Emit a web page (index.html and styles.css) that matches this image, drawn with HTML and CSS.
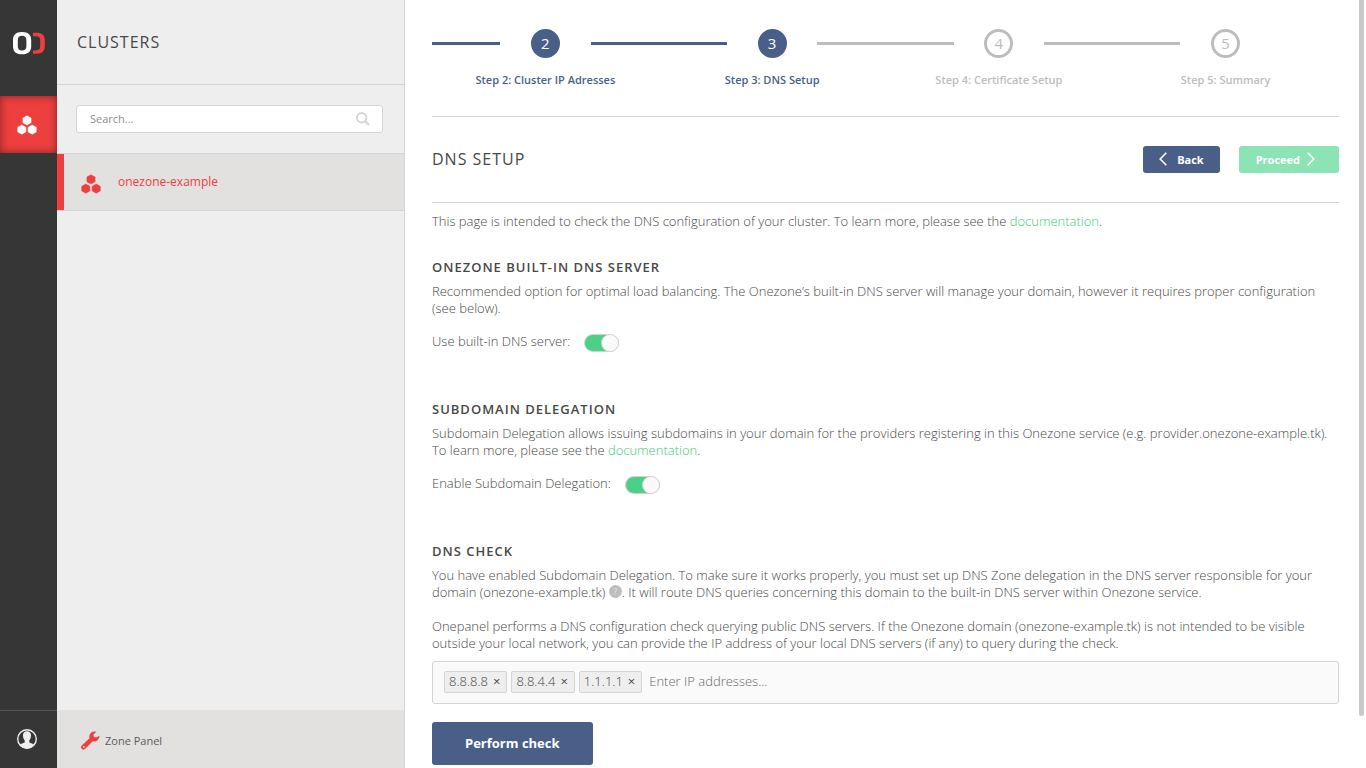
FILE: index.html
```html
<!DOCTYPE html>
<html lang="en">
<head>
<meta charset="utf-8">
<meta name="viewport" content="width=device-width, initial-scale=1">
<title>DNS Setup</title>
<link rel="stylesheet" href="styles.css">
</head>
<body>
<svg class="defs" aria-hidden="true">
  <symbol id="cluster" viewBox="0 0 20 20">
    <path d="M10 .8l4.100 2.300v4.600L10 10 5.900 7.700V3.100zM4.800 10l4.100 2.300v4.600l-4.100 2.300-4.100-2.300v-4.600zM15.200 10l4.100 2.300v4.600l-4.100 2.300-4.100-2.300v-4.600z" stroke="currentColor" stroke-width=".5" stroke-linejoin="round"/>
  </symbol>
</svg>
<div class="app">
  <nav class="rail" aria-label="Main">
    <a class="rail-logo" href="#" aria-label="Home">
      <svg width="32" height="24" viewBox="0 0 32 24">
        <path fill="#fff" fill-rule="evenodd" d="M9 1c6.500 0 9.200 3 9.200 8.500v5.500c0 5.500-2.700 8.300-9.200 8.300S0 20.500 0 15V9.500C0 4 2.500 1 9 1zm0 3.800c-3 0-4.200 1.500-4.200 4.700V15c0 3.200 1.200 4.600 4.200 4.600s4.400-1.400 4.400-4.600V9.500c0-3.200-1.400-4.700-4.400-4.700z"/>
        <path fill="#ee3f3f" d="M20 1.800h3.500c5.500 0 8.300 2.200 8.300 7.500V15c0 5.300-2.800 7.700-8.300 7.700H20v-3.300h2.500c3.300 0 4.700-1.200 4.700-4.400V9.500c0-3.200-1.400-4.300-4.700-4.300H20z"/>
      </svg>
    </a>
    <a class="rail-item" href="#" aria-label="Clusters"><svg width="20" height="20"><use href="#cluster"/></svg></a>
    <button class="rail-user" type="button" aria-label="Account">
      <svg width="22" height="22" viewBox="0 0 22 22">
        <circle cx="11" cy="11" r="9.300" fill="none" stroke="#eee" stroke-width="1.400"/>
        <path d="M11 3.300c-3 0-4.200 2-4 4.500.1 2 .8 3.700 1.700 4.700v2c-1.500.9-3.600 1-5.200 2.400a9.500 9.500 0 0 0 15 0c-1.600-1.400-3.700-1.500-5.200-2.400v-2c.9-1 1.600-2.700 1.700-4.700.2-2.500-1-4.500-4-4.500z" fill="#eee"/>
      </svg>
    </button>
  </nav>

  <aside class="sidebar">
    <h1 class="title sidebar-title">CLUSTERS</h1>
    <div class="search">
      <input class="search-input" type="search" placeholder="Search..." aria-label="Search clusters">
      <svg class="search-icon" width="14" height="14" viewBox="0 0 14 14" fill="none" stroke="#d5d5d5" stroke-width="2">
        <circle cx="5.700" cy="5.700" r="4.700"/><path d="M9 9l4 4" stroke-width="2.400"/>
      </svg>
    </div>
    <a class="cluster" href="#"><svg width="20" height="20"><use href="#cluster"/></svg><span>onezone-example</span></a>
    <a class="panel-link" href="#">
      <svg width="19" height="19" viewBox="0 0 19 19" fill="#ee3f3f"><path fill-rule="evenodd" d="M15.500.8a5.300 5.300 0 0 0-7 6.400L.8 14.600a2.100 2.100 0 0 0 3.200 3.300l7.700-7.600a5.300 5.300 0 0 0 6.700-5.500l-3 1.700-2.400-.6-.7-2.400zM2.800 15a.9.9 0 1 1 0 1.800.9.9 0 0 1 0-1.800z"/></svg>
      <span>Zone Panel</span>
    </a>
  </aside>

  <main class="main">
    <ol class="steps">
      <li class="step done"><div class="track"><i class="line"></i><span class="dot">2</span><i class="line"></i></div><span class="step-label">Step 2: Cluster IP Adresses</span></li>
      <li class="step done" aria-current="step"><div class="track"><i class="line"></i><span class="dot">3</span><i class="line next"></i></div><span class="step-label">Step 3: DNS Setup</span></li>
      <li class="step"><div class="track"><i class="line"></i><span class="dot">4</span><i class="line"></i></div><span class="step-label">Step 4: Certificate Setup</span></li>
      <li class="step"><div class="track"><i class="line"></i><span class="dot">5</span><i class="line none"></i></div><span class="step-label">Step 5: Summary</span></li>
    </ol>

    <header class="page-head">
      <h2 class="title">DNS SETUP</h2>
      <div class="actions">
        <button class="btn btn-back" type="button"><svg width="8" height="14" viewBox="0 0 8 14" fill="none" stroke="#fff" stroke-width="1.600"><path d="M7.300.8L1.200 7l6.100 6.200"/></svg>Back</button>
        <button class="btn btn-next" type="button" disabled>Proceed<svg width="8" height="14" viewBox="0 0 8 14" fill="none" stroke="#fff" stroke-width="1.600"><path d="M.7.8L6.800 7 .7 13.200"/></svg></button>
      </div>
    </header>

    <p class="intro">This page is intended to check the DNS configuration of your cluster. To learn more, please see the <a class="link" href="#">documentation</a>.</p>

    <section class="section">
      <h3 class="section-title">ONEZONE BUILT-IN DNS SERVER</h3>
      <p>Recommended option for optimal load balancing. The Onezone’s built-in DNS server will manage your domain, however it requires proper configuration (see below).</p>
      <div class="toggle-row"><label for="builtin">Use built-in DNS server:</label><input class="toggle" id="builtin" type="checkbox" role="switch" checked></div>
    </section>

    <section class="section">
      <h3 class="section-title">SUBDOMAIN DELEGATION</h3>
      <p>Subdomain Delegation allows issuing subdomains in your domain for the providers registering in this Onezone service (e.g. provider.onezone-example.tk). To learn more, please see the <a class="link" href="#">documentation</a>.</p>
      <div class="toggle-row"><label for="delegation">Enable Subdomain Delegation:</label><input class="toggle" id="delegation" type="checkbox" role="switch" checked></div>
    </section>

    <section class="section">
      <h3 class="section-title">DNS CHECK</h3>
      <p>You have enabled Subdomain Delegation. To make sure it works properly, you must set up DNS Zone delegation in the DNS server responsible for your domain (onezone-example.tk) <button class="hint" type="button">?</button>. It will route DNS queries concerning this domain to the built-in DNS server within Onezone service.</p>
      <p class="para">Onepanel performs a DNS configuration check querying public DNS servers. If the Onezone domain (onezone-example.tk) is not intended to be visible outside your local network, you can provide the IP address of your local DNS servers (if any) to query during the check.</p>
      <div class="tags">
        <span class="tag">8.8.8.8<button class="tag-x" type="button" aria-label="Remove 8.8.8.8">×</button></span>
        <span class="tag">8.8.4.4<button class="tag-x" type="button" aria-label="Remove 8.8.4.4">×</button></span>
        <span class="tag">1.1.1.1<button class="tag-x" type="button" aria-label="Remove 1.1.1.1">×</button></span>
        <input class="tags-input" type="text" placeholder="Enter IP addresses..." aria-label="IP addresses">
      </div>
      <button class="btn btn-check" type="button">Perform check</button>
    </section>
  </main>
  <div class="scroll-thumb"></div>
</div>
</body>
</html>
```
FILE: styles.css
```css
* { box-sizing: border-box; }
body, h1, h2, h3, p, ol { margin: 0; padding: 0; }
body {
  font: 400 13px/17px "Open Sans", "Noto Sans", sans-serif;
  color: #484848;
  background: #fff;
}
button, input { font: inherit; color: inherit; margin: 0; padding: 0; border: 0; background: none; }
a { color: inherit; text-decoration: none; }
.defs { display: none; }

.app { display: flex; height: 100vh; overflow: hidden; position: relative; }

.rail { flex: 0 0 57px; display: flex; flex-direction: column; background: #363636; }
.rail-logo { height: 96px; padding: 31px 0 0 13px; }
.rail-item {
  height: 57px; display: flex; align-items: center; justify-content: center; padding-right: 3px;
  background: #ee3f3f; color: #fff; fill: #fff;
  box-shadow: inset 0 0 8px rgba(0, 0, 0, .45);
}
.rail-user {
  margin-top: auto; height: 58px; padding: 0 3px 2px 0; border-top: 1px solid #575757;
  display: flex; align-items: center; justify-content: center;
}

.sidebar { flex: 0 0 348px; display: flex; flex-direction: column; background: #eee; border-right: 1px solid #d4d4d4; }
.title { font-size: 16px; line-height: 20px; font-weight: 400; letter-spacing: 1px; }
.sidebar-title { height: 85px; padding: 32px 20px 0; border-bottom: 1px solid #d4d4d4; }
.search { position: relative; padding: 20px 21px 20px 19px; }
.search-input {
  display: block; width: 100%; height: 28px; padding: 0 40px 2px 13px;
  font-size: 11px; background: #fff; border: 1px solid #d4d4d4; border-radius: 3px;
}
.search-input::placeholder { color: #8e8e8e; }
.search-icon { position: absolute; right: 34px; top: 27px; }
.cluster {
  height: 58px; display: flex; align-items: center; gap: 17px; padding: 0 17px 1px;
  background: #e2e1df; color: #ee3f3f; fill: #ee3f3f; font-size: 12px;
  border: solid #d4d4d4; border-width: 1px 0; box-shadow: inset 7px 0 #ee3f3f;
}
.cluster svg { margin: 5px 0 0 7px; }
.panel-link {
  margin-top: auto; height: 58px; display: flex; align-items: center; gap: 5px; padding: 2px 24px 0;
  background: #e2e1df; color: #5c5c5c; font-size: 11px;
}

.main { flex: 1; min-width: 0; padding: 0 27px; overflow: hidden; font-weight: 320; }
.steps { display: flex; list-style: none; height: 117px; padding-top: 29px; border-bottom: 1px solid #d4d4d4; }
.step { flex: 1; text-align: center; color: #bdbdbd; font-size: 11px; font-weight: 540; }
.done { color: #4a5f87; }
.track { display: flex; align-items: center; justify-content: space-between; margin-bottom: 13px; }
.line { width: 30%; height: 3px; background: currentColor; }
.next { background: #bdbdbd; }
.none { background: none; }
.dot {
  width: 29px; height: 29px; border: 3px solid currentColor; border-radius: 50%;
  font-size: 15px; line-height: 23px; font-weight: 400;
}
.done .dot { background: #4a5f87; border-color: #4a5f87; color: #fff; }

.page-head { height: 86px; display: flex; align-items: center; justify-content: space-between; border-bottom: 1px solid #d4d4d4; }
.page-head .title { margin-bottom: 2px; }
.actions { display: flex; gap: 19px; }
.btn { border-radius: 3px; color: #fff; font-weight: 700; background: #4a5f87; }
.btn-back, .btn-next { height: 27px; display: flex; align-items: center; padding: 0 16px 1px; font-size: 11px; }
.btn-back { gap: 10px; }
.btn-next { gap: 7px; padding: 0 24px 1px 17px; background: #8ce3b4; }

.intro { margin: 10px 0 29px; }
.link { color: #3ccc7a; }
.section { margin-bottom: 49px; }
.section-title { font-size: 13px; line-height: 17px; font-weight: 620; letter-spacing: 1px; margin-bottom: 7px; }
.toggle-row { display: flex; align-items: flex-start; gap: 14px; margin-top: 16px; }
.toggle {
  appearance: none; width: 35px; height: 18px; margin-top: 1px; border-radius: 9px;
  background: #4bd187; border: 1px solid #d4d4d4; display: flex; justify-content: flex-end;
}
.toggle::before { content: ""; width: 16px; height: 16px; border-radius: 50%; background: #fafafa; box-shadow: 0 0 0 1px #d4d4d4; }
.hint {
  width: 13px; height: 13px; border-radius: 50%; background: #bdbdbd; color: #e4e4e4;
  font-size: 9px; line-height: 13px; font-weight: 400; vertical-align: 2px;
}
.para { margin-top: 17px; }
.tags {
  display: flex; align-items: center; gap: 4px; height: 43px; margin: 9px 0 18px; padding: 0 11px 2px;
  background: #fafafa; border: 1px solid #d4d4d4; border-radius: 3px;
}
.tag { height: 22px; display: flex; align-items: center; gap: 5px; padding: 0 6px 0 4px; background: #eee; border: 1px solid #d4d4d4; border-radius: 2px; }
.tag-x { font-size: 13px; font-weight: 400; }
.tags-input { flex: 1; min-width: 0; padding-left: 3px; }
.tags-input::placeholder { color: #666; }
.btn-check { height: 43px; padding: 0 33px; }

.scroll-thumb { position: absolute; right: 2px; top: 0; width: 5px; height: 716px; background: #c9c9c9; border-radius: 0 0 3px 3px; }
```
